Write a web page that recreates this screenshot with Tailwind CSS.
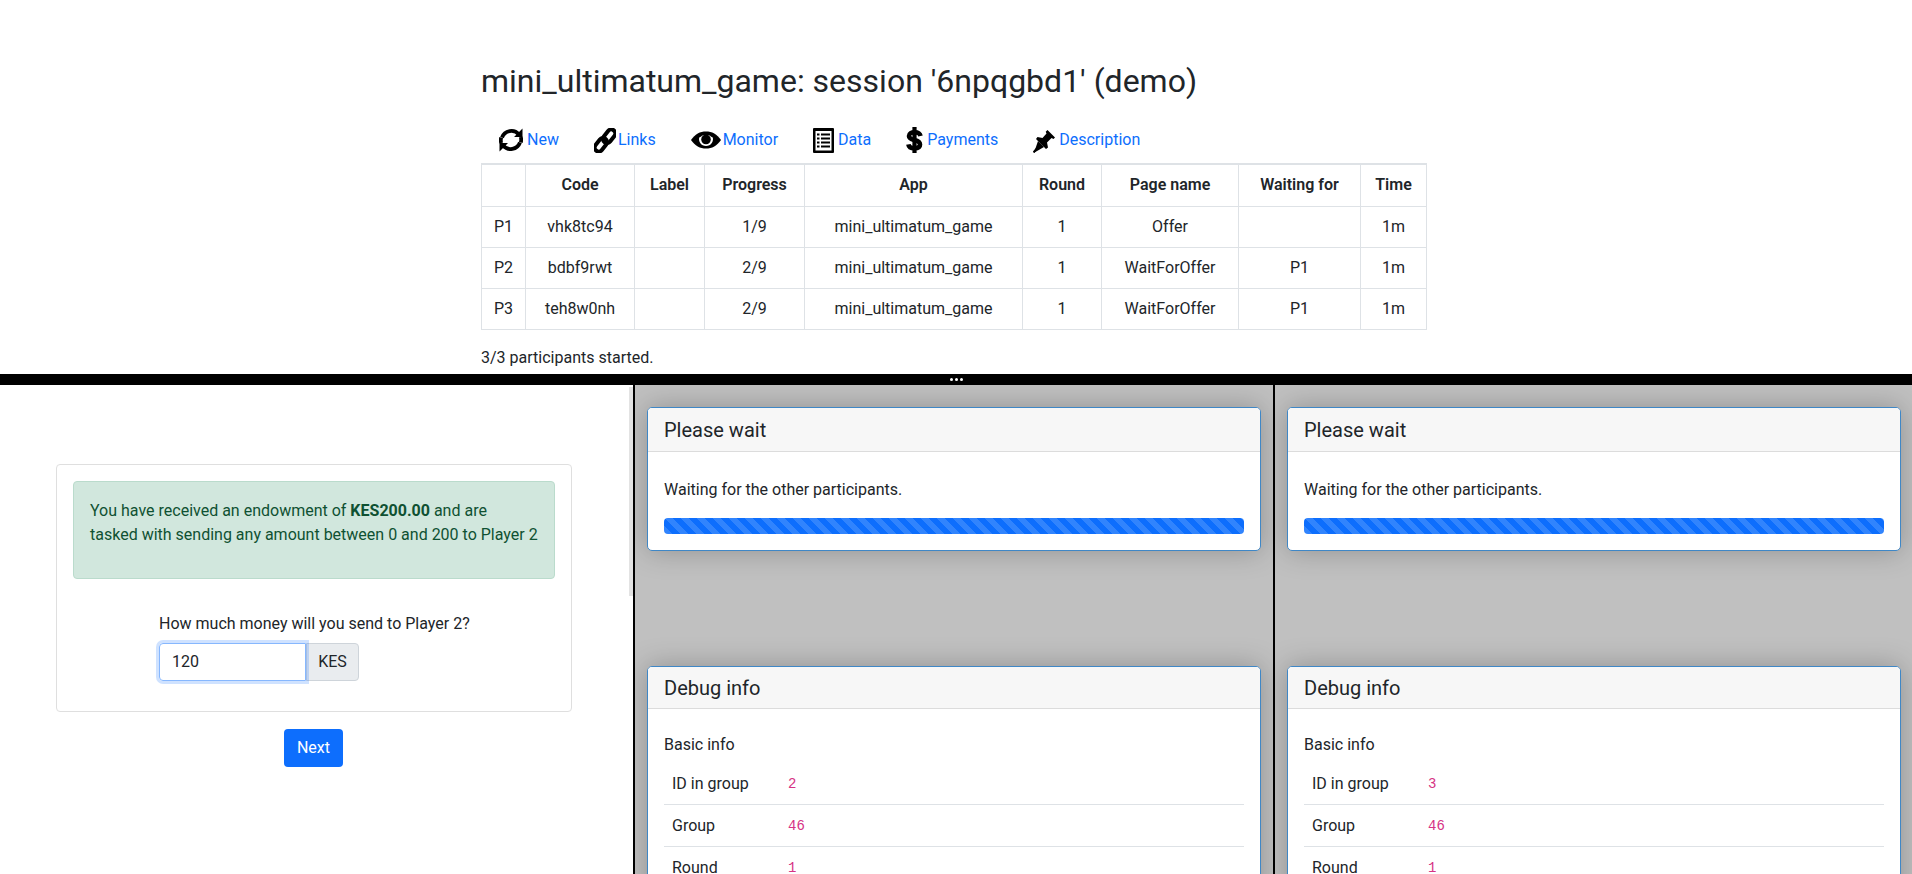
<!DOCTYPE html>
<html>
<head>
<meta charset="utf-8">
<script src="https://cdn.jsdelivr.net/npm/@tailwindcss/browser@4"></script>
</head>
<body class="m-0 h-[874px] w-[1912px] overflow-hidden bg-white text-[#212529] text-[16px] leading-[24px] font-['Roboto',sans-serif]">
<div class="flex h-[874px] flex-col">
  <section class="h-[374px] shrink-0 pl-[481px] pt-[62px]">
    <h3 class="m-0 h-[38px] text-[32px] font-normal leading-[38px]">mini_ultimatum_game: session '6npqgbd1' (demo)</h3>
    <nav class="mt-[23px] flex h-[34px] items-center gap-[35px] pl-[18px] text-[#0d6efd]">
      <a class="flex items-center gap-[4px]">
        <svg class="h-[26px] w-[24px]" viewBox="0 0 24 26"><g fill="none" stroke="#000" stroke-width="3.8"><path d="M20 7.5A10 10 0 0 0 3 10.5"/><path d="M4 18.5A10 10 0 0 0 21 15.5"/><path d="M2.2 10.5Q1.4 13 2.2 16"/><path d="M21.8 10Q22.6 13 21.8 15.5"/></g><path d="M23.5 1.5V10H15zM.5 24.5V16H9z" fill="#000"/></svg>
        <span>New</span>
      </a>
      <a class="flex items-center gap-[2px]">
        <svg class="h-[25px] w-[22px]" viewBox="0 0 22 25"><g fill="none" stroke="#000" stroke-width="4"><rect x="-4" y="-8.5" width="8" height="15" rx="4" transform="translate(14.5 9) rotate(38)"/><rect x="-4" y="-6.5" width="8" height="15" rx="4" transform="translate(7.5 16) rotate(38)"/></g></svg>
        <span>Links</span>
      </a>
      <a class="flex items-center gap-[2px]">
        <svg class="h-[18px] w-[30px]" viewBox="0 0 30 18"><path d="M0 9C4 3 9 .5 15 .5S26 3 30 9C26 15 21 17.5 15 17.5S4 15 0 9Z" fill="#000"/><path d="M8.5 5.5A7 7 0 1 0 21.5 5.5Q15 3 8.5 5.5Z" fill="#fff"/><circle cx="15" cy="8.5" r="4.8" fill="#000"/><path d="M4 9C6 6.5 8 5 10.5 4.5M26 9C24 6.5 22 5 19.5 4.5" stroke="#000" stroke-width="1.5" fill="none"/></svg>
        <span>Monitor</span>
      </a>
      <a class="flex items-center gap-[4px]">
        <svg class="h-[25px] w-[21px]" viewBox="0 0 21 25"><rect width="21" height="25" rx="1" fill="#000"/><rect x="2.5" y="3" width="16" height="19.5" fill="#fff"/><path d="M4 6.5h2.5M8 6.5h9M4 10.5h2.5M8 10.5h9M4 14.5h2.5M8 14.5h9M4 18.5h2.5M8 18.5h9" stroke="#000" stroke-width="2"/></svg>
        <span>Data</span>
      </a>
      <a class="flex items-center gap-[4px]">
        <svg class="h-[26px] w-[17px]" viewBox="0 0 17 26"><path d="M14.5 9C14 6.5 11.5 5.2 8.5 5.2S3 6.5 3 9C3 14.5 14 11.5 14 17.5C14 20 12 21.2 8.5 21.2S2.8 20 2.4 17.3" fill="none" stroke="#000" stroke-width="4.6"/><rect x="6.4" y="0" width="4.2" height="26" fill="#000"/></svg>
        <span>Payments</span>
      </a>
      <a class="flex items-center gap-[4px]">
        <svg class="h-[25px] w-[22px]" viewBox="0 0 22 25"><path d="M14.5 1.5 22 9 20.5 10.5 18.5 9.5 14 14 15 19 13 20.5 3 10.5 4.5 8.5 9.5 9.5 13.5 5 12.7 3.2Z" transform="translate(0 .5)" fill="#000"/><path d="M7.5 16 .5 24.5" stroke="#000" stroke-width="2"/><path d="M5 13 11 19 1 24.8Z" fill="#000"/></svg>
        <span>Description</span>
      </a>
    </nav>
    <table class="mt-[6px] w-[945px] table-fixed border-collapse text-center text-[16px] leading-[24px]">
      <colgroup>
        <col class="w-[44px]"><col class="w-[109px]"><col class="w-[70px]"><col class="w-[100px]"><col class="w-[218px]"><col class="w-[79px]"><col class="w-[137px]"><col class="w-[122px]"><col class="w-[66px]">
      </colgroup>
      <thead>
        <tr class="h-[42px] border-t-2 border-[#dee2e6] font-semibold">
          <th class="border border-[#dee2e6] border-t-2 font-semibold"></th><th class="border border-[#dee2e6] border-t-2 font-semibold">Code</th><th class="border border-[#dee2e6] border-t-2 font-semibold">Label</th><th class="border border-[#dee2e6] border-t-2 font-semibold">Progress</th><th class="border border-[#dee2e6] border-t-2 font-semibold">App</th><th class="border border-[#dee2e6] border-t-2 font-semibold">Round</th><th class="border border-[#dee2e6] border-t-2 font-semibold">Page name</th><th class="border border-[#dee2e6] border-t-2 font-semibold">Waiting for</th><th class="border border-[#dee2e6] border-t-2 font-semibold">Time</th>
        </tr>
      </thead>
      <tbody>
        <tr class="h-[41px]"><td class="border border-[#dee2e6]">P1</td><td class="border border-[#dee2e6]">vhk8tc94</td><td class="border border-[#dee2e6]"></td><td class="border border-[#dee2e6]">1/9</td><td class="border border-[#dee2e6]">mini_ultimatum_game</td><td class="border border-[#dee2e6]">1</td><td class="border border-[#dee2e6]">Offer</td><td class="border border-[#dee2e6]"></td><td class="border border-[#dee2e6]">1m</td></tr>
        <tr class="h-[41px]"><td class="border border-[#dee2e6]">P2</td><td class="border border-[#dee2e6]">bdbf9rwt</td><td class="border border-[#dee2e6]"></td><td class="border border-[#dee2e6]">2/9</td><td class="border border-[#dee2e6]">mini_ultimatum_game</td><td class="border border-[#dee2e6]">1</td><td class="border border-[#dee2e6]">WaitForOffer</td><td class="border border-[#dee2e6]">P1</td><td class="border border-[#dee2e6]">1m</td></tr>
        <tr class="h-[41px]"><td class="border border-[#dee2e6]">P3</td><td class="border border-[#dee2e6]">teh8w0nh</td><td class="border border-[#dee2e6]"></td><td class="border border-[#dee2e6]">2/9</td><td class="border border-[#dee2e6]">mini_ultimatum_game</td><td class="border border-[#dee2e6]">1</td><td class="border border-[#dee2e6]">WaitForOffer</td><td class="border border-[#dee2e6]">P1</td><td class="border border-[#dee2e6]">1m</td></tr>
      </tbody>
    </table>
    <p class="m-0 mt-[16px]">3/3 participants started.</p>
  </section>
  <div class="flex h-[11px] shrink-0 items-center justify-center gap-[2px] bg-black">
    <span class="size-[3px] rounded-full bg-white"></span><span class="size-[3px] rounded-full bg-white"></span><span class="size-[3px] rounded-full bg-white"></span>
  </div>
  <div class="flex min-h-0 flex-1">
    <div class="relative h-full w-[633px] shrink-0 overflow-hidden bg-white">
      <div class="absolute right-0 top-[2px] h-[209px] w-[4px] bg-[#e3e3e3]"></div>
      <div class="ml-[56px] mt-[79px] h-[248px] w-[516px] rounded-[4px] border border-[#dfdfdf] p-[16px] pb-0">
        <div class="h-[98px] rounded-[4px] border border-[#badbcc] bg-[#d1e7dd] px-[16px] pt-[17px] text-[#0f5132]">You have received an endowment of <b class="font-bold">KES200.00</b> and are tasked with sending any amount between 0 and 200 to Player 2</div>
        <div class="ml-[86px] mt-[33px]">
          <div class="h-[24px]">How much money will you send to Player 2?</div>
          <div class="mt-[7px] flex h-[38px]">
            <input value="120" class="relative z-10 w-[147px] rounded-l-[4px] border border-[#86b7fe] px-[12px] text-[#212529] shadow-[0_0_0_3px_rgba(13,110,253,0.2)] outline-none">
            <span class="flex w-[53px] items-center justify-center rounded-r-[4px] border border-[#ced4da] bg-[#e9ecef]">KES</span>
          </div>
        </div>
      </div>
      <button class="ml-[284px] mt-[17px] h-[38px] w-[59px] rounded-[4px] bg-[#0d6efd] text-white">Next</button>
    </div>
    <div class="h-full w-[2px] shrink-0 bg-black"></div>
    <div class="h-full w-[638px] shrink-0 overflow-hidden bg-[#c0c0c0] px-[12px] pt-[22px]">
      <div class="h-[144px] overflow-hidden rounded-[5px] border border-[#3f87c6] bg-white shadow-[0_0_28px_rgba(0,0,0,0.25)]">
        <div class="flex h-[44px] items-center border-b border-[#dcdcdc] bg-[#f7f7f7] px-[16px] text-[20px]">Please wait</div>
        <div class="px-[16px] pt-[26px]">Waiting for the other participants.<div class="mt-[16px] h-[16px] rounded-[4px] bg-[#0d6efd] bg-[linear-gradient(45deg,rgba(255,255,255,0.15)_25%,transparent_25%,transparent_50%,rgba(255,255,255,0.15)_50%,rgba(255,255,255,0.15)_75%,transparent_75%,transparent)] bg-[length:16px_16px]"></div></div>
      </div>
      <div class="mt-[115px] h-[300px] overflow-hidden rounded-[5px] border border-[#3f87c6] bg-white shadow-[0_0_28px_rgba(0,0,0,0.25)]">
        <div class="flex h-[42px] items-center border-b border-[#dcdcdc] bg-[#f7f7f7] px-[16px] text-[20px]">Debug info</div>
        <div class="px-[16px] pt-[24px]">
          <div class="h-[24px]">Basic info</div>
          <div class="mt-[6px] flex h-[42px] items-center border-b border-[#dee2e6] pl-[8px]"><span class="w-[116px]">ID in group</span><code class="font-['Liberation_Mono',monospace] text-[14px] text-[#d63384]">2</code></div>
          <div class="flex h-[42px] items-center border-b border-[#dee2e6] pl-[8px]"><span class="w-[116px]">Group</span><code class="font-['Liberation_Mono',monospace] text-[14px] text-[#d63384]">46</code></div>
          <div class="flex h-[42px] items-center pl-[8px]"><span class="w-[116px]">Round</span><code class="font-['Liberation_Mono',monospace] text-[14px] text-[#d63384]">1</code></div>
        </div>
      </div>
    </div>
    <div class="h-full w-[2px] shrink-0 bg-black"></div>
    <div class="h-full min-w-0 flex-1 overflow-hidden bg-[#c0c0c0] pl-[12px] pr-[11px] pt-[22px]">
      <div class="h-[144px] overflow-hidden rounded-[5px] border border-[#3f87c6] bg-white shadow-[0_0_28px_rgba(0,0,0,0.25)]">
        <div class="flex h-[44px] items-center border-b border-[#dcdcdc] bg-[#f7f7f7] px-[16px] text-[20px]">Please wait</div>
        <div class="px-[16px] pt-[26px]">Waiting for the other participants.<div class="mt-[16px] h-[16px] rounded-[4px] bg-[#0d6efd] bg-[linear-gradient(45deg,rgba(255,255,255,0.15)_25%,transparent_25%,transparent_50%,rgba(255,255,255,0.15)_50%,rgba(255,255,255,0.15)_75%,transparent_75%,transparent)] bg-[length:16px_16px]"></div></div>
      </div>
      <div class="mt-[115px] h-[300px] overflow-hidden rounded-[5px] border border-[#3f87c6] bg-white shadow-[0_0_28px_rgba(0,0,0,0.25)]">
        <div class="flex h-[42px] items-center border-b border-[#dcdcdc] bg-[#f7f7f7] px-[16px] text-[20px]">Debug info</div>
        <div class="px-[16px] pt-[24px]">
          <div class="h-[24px]">Basic info</div>
          <div class="mt-[6px] flex h-[42px] items-center border-b border-[#dee2e6] pl-[8px]"><span class="w-[116px]">ID in group</span><code class="font-['Liberation_Mono',monospace] text-[14px] text-[#d63384]">3</code></div>
          <div class="flex h-[42px] items-center border-b border-[#dee2e6] pl-[8px]"><span class="w-[116px]">Group</span><code class="font-['Liberation_Mono',monospace] text-[14px] text-[#d63384]">46</code></div>
          <div class="flex h-[42px] items-center pl-[8px]"><span class="w-[116px]">Round</span><code class="font-['Liberation_Mono',monospace] text-[14px] text-[#d63384]">1</code></div>
        </div>
      </div>
    </div>
  </div>
</div>
</body>
</html>
